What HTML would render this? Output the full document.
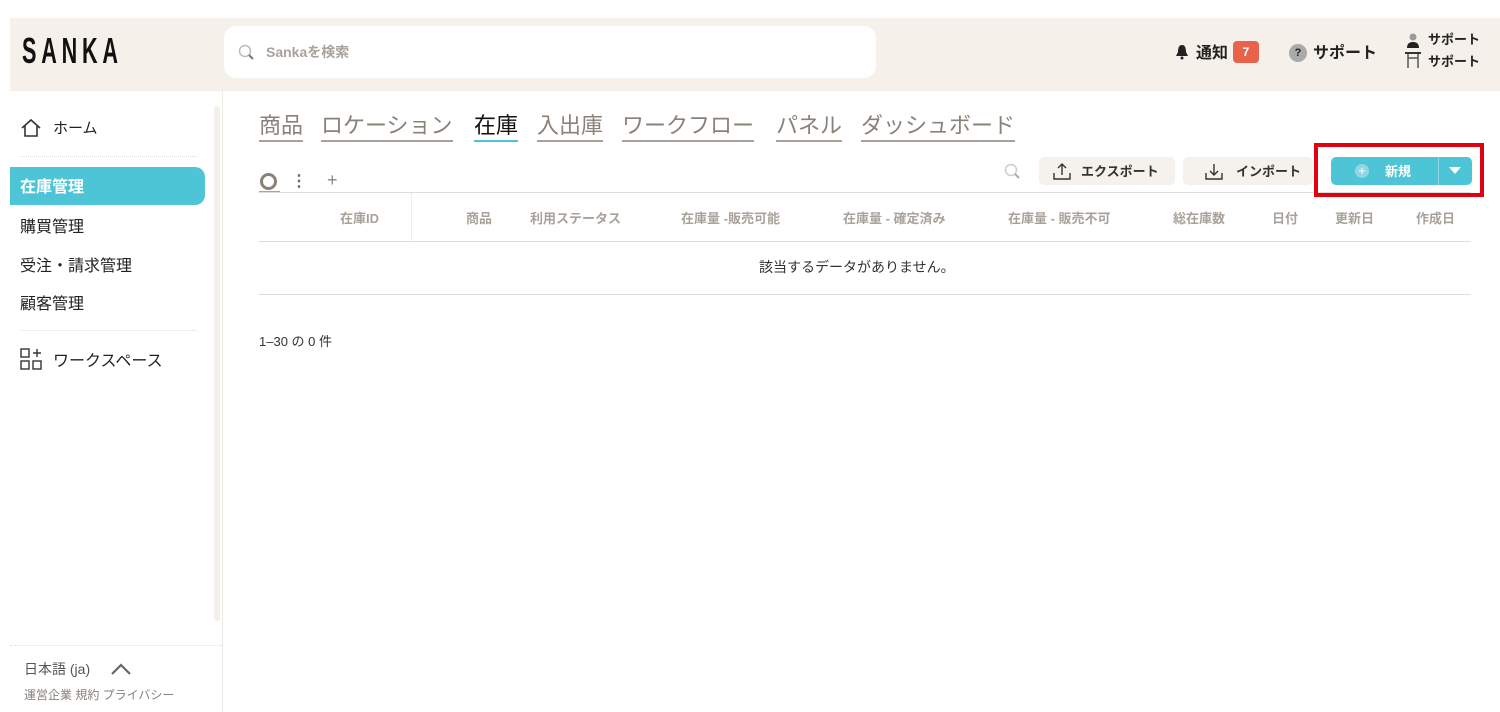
<!DOCTYPE html>
<html><head><meta charset="utf-8"><style>
*{margin:0;padding:0;box-sizing:border-box}
body{width:1500px;height:712px;background:#fff;font-family:"Liberation Sans","Noto Sans CJK JP",sans-serif;position:relative;overflow:hidden;color:#222}
.a{position:absolute;white-space:nowrap}
.hdr{left:10px;top:18px;width:1490px;height:73px;background:#f5f1ea}
.tab{font-size:22px;color:#8a8178;border-bottom:2px solid #a8a29b;padding-bottom:0;line-height:28px}
.th{font-size:13px;color:#a8a29b;font-weight:bold;top:208px}
.side{font-size:16px;color:#222}
</style></head><body>
<div class="a hdr"></div>
<div class="a" style="left:22px;top:30px;font-size:36px;font-weight:bold;letter-spacing:8px;color:#111;transform:scaleX(.6);transform-origin:left">SANKA</div>
<div class="a" style="left:224px;top:26px;width:652px;height:52px;background:#fff;border-radius:12px"></div>
<svg class="a" style="left:238px;top:44px" width="18" height="18"><circle cx="7" cy="7" r="5.5" fill="none" stroke="#bbb" stroke-width="1.5"/><line x1="11" y1="11" x2="15" y2="15" stroke="#777" stroke-width="2"/></svg>
<div class="a" style="left:266px;top:42px;font-size:14px;color:#a8a29b;font-weight:bold">Sankaを検索</div>
<svg class="a" style="left:1175px;top:44px" width="14" height="16"><path d="M7 1C4 1 3 4 3 8L1 12H13L11 8C11 4 10 1 7 1Z" fill="#222"/><circle cx="7" cy="14" r="1.5" fill="#222"/></svg>
<div class="a" style="left:1196px;top:39px;font-size:16px;font-weight:bold">通知</div>
<div class="a" style="left:1233px;top:41px;width:26px;height:22px;background:#e8634a;border-radius:4px;color:#fff;font-size:12px;font-weight:bold;text-align:center;line-height:22px">7</div>
<div class="a" style="left:1289px;top:44px;width:18px;height:18px;border-radius:50%;background:#aaa;color:#222;font-size:11px;font-weight:bold;text-align:center;line-height:18px">?</div>
<div class="a" style="left:1313px;top:39px;font-size:16px;font-weight:bold">サポート</div>
<svg class="a" style="left:1404px;top:32px" width="18" height="40"><circle cx="9" cy="5" r="3.5" fill="#999"/><path d="M3 16Q3 10 9 10Q15 10 15 16Z" fill="#222"/><rect x="1" y="20" width="16" height="2" fill="#333"/><path d="M4 22V36M14 22V36M4 26H14" stroke="#555" stroke-width="1.5"/></svg>
<div class="a" style="left:1428px;top:29px;font-size:13px;font-weight:bold">サポート</div>
<div class="a" style="left:1428px;top:51px;font-size:13px;font-weight:bold">サポート</div>

<div class="a" style="left:222px;top:91px;width:1px;height:621px;background:#eee9e2"></div>
<div class="a" style="left:214px;top:106px;width:6px;height:515px;background:#f3efe9;border-radius:3px"></div>
<svg class="a" style="left:20px;top:118px" width="22" height="20"><path d="M2 10L11 2L20 10M5 8V18H17V8" fill="none" stroke="#333" stroke-width="1.6"/></svg>
<div class="a side" style="left:53px;top:117px;font-size:15px">ホーム</div>
<div class="a" style="left:20px;top:156px;width:177px;border-top:1px dotted #ddd"></div>
<div class="a" style="left:10px;top:167px;width:195px;height:38px;background:#4ec5d6;border-radius:0 10px 10px 0"></div>
<div class="a side" style="left:20px;top:173px;color:#fff;font-weight:bold">在庫管理</div>
<div class="a side" style="left:20px;top:213px">購買管理</div>
<div class="a side" style="left:20px;top:252px">受注・請求管理</div>
<div class="a side" style="left:20px;top:290px">顧客管理</div>
<div class="a" style="left:20px;top:330px;width:177px;border-top:1px dotted #ddd"></div>
<svg class="a" style="left:20px;top:348px" width="22" height="22"><rect x="1" y="1" width="8" height="8" fill="none" stroke="#333" stroke-width="1.4"/><rect x="1" y="13" width="8" height="8" fill="none" stroke="#333" stroke-width="1.4"/><rect x="13" y="13" width="8" height="8" fill="none" stroke="#333" stroke-width="1.4"/><path d="M17 1V9M13 5H21" stroke="#333" stroke-width="1.4"/></svg>
<div class="a side" style="left:53px;top:347px">ワークスペース</div>
<div class="a" style="left:10px;top:645px;width:212px;border-top:1px dotted #ddd"></div>
<div class="a" style="left:24px;top:659px;font-size:14px;color:#555">日本語 (ja)</div>
<svg class="a" style="left:110px;top:662px" width="22" height="14"><path d="M2 12L11 3L20 12" fill="none" stroke="#666" stroke-width="2.2"/></svg>
<div class="a" style="left:24px;top:686px;font-size:12px;color:#8a8178">運営企業 規約 プライバシー</div>

<div class="a tab" style="left:259px;top:112px">商品</div>
<div class="a tab" style="left:321px;top:112px">ロケーション</div>
<div class="a tab" style="left:474px;top:112px;color:#111;border-color:#4ec5d6">在庫</div>
<div class="a tab" style="left:537px;top:112px">入出庫</div>
<div class="a tab" style="left:622px;top:112px">ワークフロー</div>
<div class="a tab" style="left:776px;top:112px">パネル</div>
<div class="a tab" style="left:861px;top:112px">ダッシュボード</div>

<div class="a" style="left:260px;top:173px;width:17px;height:17px;border:3.5px solid #8a8178;border-radius:50%"></div>
<div class="a" style="left:259px;top:191px;width:21px;height:2px;background:#4ec5d6"></div>
<div class="a" style="left:291px;top:171px;font-size:16px;color:#666;font-weight:bold">⋮</div>
<div class="a" style="left:327px;top:170px;font-size:18px;color:#888">+</div>
<div class="a" style="left:259px;top:192px;width:1212px;height:1px;background:#ddd"></div>

<svg class="a" style="left:1004px;top:163px" width="18" height="18"><circle cx="7" cy="7" r="5.5" fill="none" stroke="#ccc" stroke-width="1.5"/><line x1="11" y1="11" x2="15" y2="15" stroke="#aaa" stroke-width="2"/></svg>
<div class="a" style="left:1039px;top:157px;width:136px;height:28px;background:#f5f2ed;border-radius:5px"></div>
<svg class="a" style="left:1052px;top:161px" width="20" height="20"><path d="M10 14V3M6 7L10 3L14 7M2 12V18H18V12" fill="none" stroke="#333" stroke-width="1.4"/></svg>
<div class="a" style="left:1081px;top:161px;font-size:13px;font-weight:bold;color:#333">エクスポート</div>
<div class="a" style="left:1183px;top:157px;width:130px;height:28px;background:#f5f2ed;border-radius:5px"></div>
<svg class="a" style="left:1204px;top:161px" width="20" height="20"><path d="M10 3V14M6 10L10 14L14 10M2 12V18H18V12" fill="none" stroke="#333" stroke-width="1.4"/></svg>
<div class="a" style="left:1236px;top:161px;font-size:13px;font-weight:bold;color:#333">インポート</div>
<div class="a" style="left:1314px;top:143px;width:170px;height:54px;border:4px solid #e0000f"></div>
<div class="a" style="left:1331px;top:157px;width:141px;height:28px;background:#4ec5d6;border-radius:5px"></div>
<div class="a" style="left:1438px;top:157px;width:1px;height:28px;background:#8fd8e3"></div>
<div class="a" style="left:1355px;top:164px;width:14px;height:14px;border-radius:50%;background:#8fd8e3;color:#fff;font-size:13px;text-align:center;line-height:14px">+</div>
<div class="a" style="left:1385px;top:161px;font-size:13px;font-weight:bold;color:#fff">新規</div>
<svg class="a" style="left:1449px;top:167px" width="12" height="8"><path d="M0 0H12L6 7Z" fill="#fff"/></svg>

<div class="a" style="left:411px;top:193px;width:1px;height:48px;background:#eee"></div>
<div class="a th" style="left:340px">在庫ID</div>
<div class="a th" style="left:466px">商品</div>
<div class="a th" style="left:530px">利用ステータス</div>
<div class="a th" style="left:681px">在庫量 -販売可能</div>
<div class="a th" style="left:843px">在庫量 - 確定済み</div>
<div class="a th" style="left:1008px">在庫量 - 販売不可</div>
<div class="a th" style="left:1173px">総在庫数</div>
<div class="a th" style="left:1272px">日付</div>
<div class="a th" style="left:1335px">更新日</div>
<div class="a th" style="left:1416px">作成日</div>
<div class="a" style="left:259px;top:241px;width:1212px;height:1px;background:#ddd"></div>
<div class="a" style="left:759px;top:257px;font-size:14px;color:#333">該当するデータがありません。</div>
<div class="a" style="left:259px;top:294px;width:1212px;height:1px;background:#ddd"></div>
<div class="a" style="left:259px;top:331px;font-size:13px;color:#333">1–30 の 0 件</div>
</body></html>
